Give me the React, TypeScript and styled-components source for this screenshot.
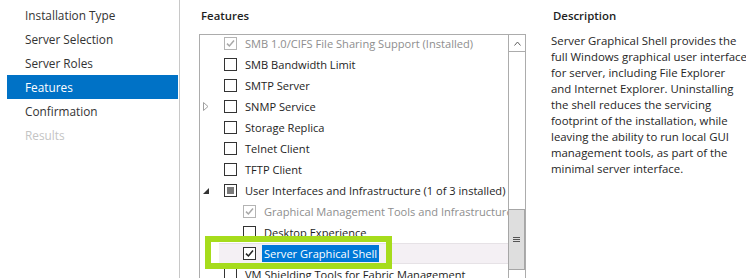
import React from "react";
import styled, { createGlobalStyle } from "styled-components";

type CheckState = "off" | "on" | "mixed";

type Feature = {
  label: string;
  level: number;
  check: CheckState;
  disabled?: boolean;
  expander?: "closed" | "open";
  selected?: boolean;
};

const GlobalStyle = createGlobalStyle`
  html, body {
    margin: 0;
    padding: 0;
    background: #fff;
  }
  body {
    font-family: "Open Sans", "Noto Sans", "Liberation Sans", sans-serif;
    font-size: 11.4px;
    color: #1e1e1e;
  }
`;

const Frame = styled.div`
  display: flex;
  width: 746px;
  height: 278px;
  overflow: hidden;
  background: #fff;
`;

const Nav = styled.nav`
  width: 179px;
  flex-shrink: 0;
  padding-top: 3px;
  border-right: 1px solid #c8c8c8;
  box-sizing: content-box;
`;

const NavItem = styled.div<{ $active?: boolean; $disabled?: boolean }>`
  height: 24px;
  line-height: 24px;
  width: 153px;
  margin-left: 7px;
  padding-left: 18px;
  font-size: 11.8px;
  background: ${(p) => (p.$active ? "#0072c6" : "transparent")};
  color: ${(p) => (p.$active ? "#fff" : p.$disabled ? "#c4c4c4" : "#333")};
`;

const FeaturesPane = styled.section`
  display: flex;
  flex-direction: column;
  width: 327px;
  margin-left: 19px;
  flex-shrink: 0;
`;

const PaneTitle = styled.div`
  height: 16px;
  line-height: 16px;
  margin-top: 8px;
  padding-left: 2px;
  font-weight: 600;
  color: #1e1e1e;
`;

const ListBox = styled.div`
  position: relative;
  display: flex;
  margin-top: 10px;
  height: 260px;
  border: 1px solid #acacac;
  border-bottom: none;
`;

const Viewport = styled.div`
  flex: 1;
  overflow: hidden;
`;

const Rows = styled.div`
  margin-top: -2px;
`;

const Row = styled.div`
  display: flex;
  height: 21px;
`;

const Indent = styled.div<{ $level: number }>`
  width: ${(p) => p.$level * 19}px;
  flex-shrink: 0;
`;

const Item = styled.div<{ $highlight?: boolean }>`
  flex: 1;
  display: flex;
  align-items: center;
  background: ${(p) => (p.$highlight ? "#f4f0f4" : "transparent")};
  box-shadow: ${(p) => (p.$highlight ? "inset 0 1px 0 #e6e2e6, inset 0 -1px 0 #e6e2e6" : "none")};
`;

const Expander = styled.div`
  width: 21px;
  padding-left: 3px;
  height: 21px;
  display: flex;
  align-items: center;
  flex-shrink: 0;
`;

const Box = styled.div<{ $disabled?: boolean }>`
  width: 11px;
  height: 11px;
  border: 1px solid ${(p) => (p.$disabled ? "#b4b4b4" : "#333")};
  background: #fff;
  display: flex;
  align-items: center;
  justify-content: center;
  flex-shrink: 0;
`;

const MixedFill = styled.div`
  width: 7px;
  height: 7px;
  background: #7a7a7a;
`;

const Label = styled.span<{ $disabled?: boolean; $selected?: boolean }>`
  margin-left: 6px;
  padding: 0 2px;
  height: 17px;
  line-height: 17px;
  font-size: 11.1px;
  white-space: nowrap;
  color: ${(p) => (p.$selected ? "#fff" : p.$disabled ? "#8e8e8e" : "#1e1e1e")};
  background: ${(p) => (p.$selected ? "#0078d7" : "transparent")};
`;

const ScrollBar = styled.div`
  width: 16px;
  flex-shrink: 0;
  border-left: 1px solid #acacac;
  display: flex;
  flex-direction: column;
`;

const ScrollButton = styled.div`
  height: 16px;
  border-bottom: 1px solid #acacac;
  display: flex;
  align-items: center;
  justify-content: center;
`;

const Thumb = styled.div`
  margin-top: 157px;
  height: 59px;
  margin-left: -1px;
  border: 1px solid #a6a6a6;
  background: #dedede;
  display: flex;
  align-items: center;
  justify-content: center;
`;

const Callout = styled.div`
  position: absolute;
  left: 5px;
  top: 201px;
  width: 175px;
  height: 21px;
  border: 6px solid #a6dc1c;
  pointer-events: none;
`;

const DescPane = styled.section`
  width: 196px;
  margin-left: 25px;
  flex-shrink: 0;
`;

const DescText = styled.p`
  margin: 9px 0 0 0;
  line-height: 16px;
  white-space: nowrap;
  color: #262626;
`;

const features: Feature[] = [
  { label: "SMB 1.0/CIFS File Sharing Support (Installed)", level: 0, check: "on", disabled: true },
  { label: "SMB Bandwidth Limit", level: 0, check: "off" },
  { label: "SMTP Server", level: 0, check: "off" },
  { label: "SNMP Service", level: 0, check: "off", expander: "closed" },
  { label: "Storage Replica", level: 0, check: "off" },
  { label: "Telnet Client", level: 0, check: "off" },
  { label: "TFTP Client", level: 0, check: "off" },
  { label: "User Interfaces and Infrastructure (1 of 3 installed)", level: 0, check: "mixed", expander: "open" },
  { label: "Graphical Management Tools and Infrastructure (Installed)", level: 1, check: "on", disabled: true },
  { label: "Desktop Experience", level: 1, check: "off" },
  { label: "Server Graphical Shell", level: 1, check: "on", selected: true },
  { label: "VM Shielding Tools for Fabric Management", level: 0, check: "off" },
];

const navItems = ["Installation Type", "Server Selection", "Server Roles", "Features", "Confirmation", "Results"];

const descLines = [
  "Server Graphical Shell provides the",
  "full Windows graphical user interface",
  "for server, including File Explorer",
  "and Internet Explorer. Uninstalling",
  "the shell reduces the servicing",
  "footprint of the installation, while",
  "leaving the ability to run local GUI",
  "management tools, as part of the",
  "minimal server interface.",
];

const CheckMark = ({ color }: { color: string }) => (
  <svg width="9" height="9" viewBox="0 0 9 9">
    <path d="M1 4.6 L3.4 7 L8 1.6" fill="none" stroke={color} strokeWidth="1.5" />
  </svg>
);

const Check = ({ state, disabled }: { state: CheckState; disabled?: boolean }) => (
  <Box $disabled={disabled}>
    {state === "on" && <CheckMark color={disabled ? "#a8a8a8" : "#222"} />}
    {state === "mixed" && <MixedFill />}
  </Box>
);

const Arrow = ({ kind }: { kind?: "closed" | "open" }) => {
  if (kind === "closed") {
    return (
      <svg width="6" height="9" viewBox="0 0 6 9">
        <path d="M0.5 0.5 L5 4.5 L0.5 8.5 Z" fill="none" stroke="#a0a0a0" />
      </svg>
    );
  }
  if (kind === "open") {
    return (
      <svg width="6" height="6" viewBox="0 0 6 6">
        <path d="M6 0 L6 6 L0 6 Z" fill="#333" />
      </svg>
    );
  }
  return null;
};

export default function App() {
  return (
    <>
      <GlobalStyle />
      <Frame>
        <Nav>
          {navItems.map((n) => (
            <NavItem key={n} $active={n === "Features"} $disabled={n === "Results"}>
              {n}
            </NavItem>
          ))}
        </Nav>
        <FeaturesPane>
          <PaneTitle>Features</PaneTitle>
          <ListBox>
            <Viewport>
              <Rows>
                {features.map((f) => (
                  <Row key={f.label}>
                    <Indent $level={f.level} />
                    <Item $highlight={f.selected}>
                      <Expander>
                        <Arrow kind={f.expander} />
                      </Expander>
                      <Check state={f.check} disabled={f.disabled} />
                      <Label $disabled={f.disabled} $selected={f.selected}>
                        {f.label}
                      </Label>
                    </Item>
                  </Row>
                ))}
              </Rows>
            </Viewport>
            <ScrollBar>
              <ScrollButton>
                <svg width="7" height="5" viewBox="0 0 7 5">
                  <path d="M0.5 4.5 L3.5 1 L6.5 4.5" fill="none" stroke="#606060" />
                </svg>
              </ScrollButton>
              <Thumb>
                <svg width="7" height="6" viewBox="0 0 7 6">
                  <path d="M0 0.5 H7 M0 2.5 H7 M0 4.5 H7" stroke="#555" />
                </svg>
              </Thumb>
            </ScrollBar>
            <Callout />
          </ListBox>
        </FeaturesPane>
        <DescPane>
          <PaneTitle>Description</PaneTitle>
          <DescText>
            {descLines.map((line, i) => (
              <React.Fragment key={i}>
                {line}
                {i < descLines.length - 1 && <br />}
              </React.Fragment>
            ))}
          </DescText>
        </DescPane>
      </Frame>
    </>
  );
}
